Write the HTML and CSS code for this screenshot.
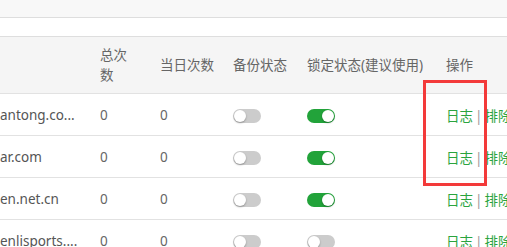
FILE: index.html
```html
<!DOCTYPE html>
<html lang="en">
<head>
    <meta charset="UTF-8">
    <title>域名列表</title>
    <link rel="stylesheet" href="styles.css">
</head>
<body>
    <div class="topbar"></div>
    <div class="toolbar"></div>

    <div class="table-wrap">
        <table class="list">
            <thead>
                <tr>
                    <th class="col-name"></th>
                    <th class="col-total"><span class="narrow">总次数</span></th>
                    <th class="col-today">当日次数</th>
                    <th class="col-backup">备份状态</th>
                    <th class="col-lock">锁定状态(建议使用)</th>
                    <th class="col-ops">操作</th>
                </tr>
            </thead>
            <tbody>
                <tr>
                    <td class="col-name">antong.co...</td>
                    <td>0</td>
                    <td>0</td>
                    <td><span class="switch"></span></td>
                    <td><span class="switch on"></span></td>
                    <td class="ops"><a>日志</a><span class="sep">|</span><a>排除</a></td>
                </tr>
                <tr>
                    <td class="col-name">ar.com</td>
                    <td>0</td>
                    <td>0</td>
                    <td><span class="switch"></span></td>
                    <td><span class="switch on"></span></td>
                    <td class="ops"><a>日志</a><span class="sep">|</span><a>排除</a></td>
                </tr>
                <tr>
                    <td class="col-name">en.net.cn</td>
                    <td>0</td>
                    <td>0</td>
                    <td><span class="switch"></span></td>
                    <td><span class="switch on"></span></td>
                    <td class="ops"><a>日志</a><span class="sep">|</span><a>排除</a></td>
                </tr>
                <tr>
                    <td class="col-name">enlisports....</td>
                    <td>0</td>
                    <td>0</td>
                    <td><span class="switch"></span></td>
                    <td><span class="switch"></span></td>
                    <td class="ops"><a>日志</a><span class="sep">|</span><a>排除</a></td>
                </tr>
            </tbody>
        </table>
        <div class="highlight"></div>
    </div>
</body>
</html>
```

FILE: styles.css
```css
body {
    margin: 0;
    font-family: "Noto Sans", "Noto Sans CJK SC", sans-serif;
    font-size: 13.5px;
    color: #666;
    background-color: #ffffff;
    overflow: hidden;
}

.topbar {
    height: 17px;
    background-color: #f8f8f8;
    border-bottom: 1px solid #dedede;
}

.toolbar {
    height: 18px;
    background-color: #ffffff;
    border-bottom: 1px solid #dedede;
}

.table-wrap {
    position: relative;
    width: 600px;
}

.list {
    border-collapse: collapse;
    table-layout: fixed;
    width: 600px;
}

.list th {
    height: 56px;
    padding: 0;
    background-color: #f5f5f5;
    font-weight: normal;
    text-align: left;
    line-height: 20px;
    color: #666;
    border-bottom: 1px solid #e2e2e2;
}

.list td {
    height: 41px;
    padding: 0;
    border-bottom: 1px solid #e2e2e2;
    color: #666;
}

.col-name { width: 100px; }
.col-total { width: 60px; }
.col-today { width: 73px; }
.col-backup { width: 74px; }
.col-lock { width: 139px; }

.narrow {
    display: block;
    width: 30px;
}

.list td.col-name {
    color: #555;
    white-space: nowrap;
    overflow: hidden;
}

.switch {
    display: inline-block;
    position: relative;
    width: 28px;
    height: 14px;
    border-radius: 7px;
    background-color: #cccccc;
    vertical-align: middle;
}

.switch::after {
    content: "";
    position: absolute;
    left: 1px;
    top: 1px;
    width: 12px;
    height: 12px;
    border-radius: 50%;
    background-color: #ffffff;
    box-shadow: 0 1px 2px rgba(0, 0, 0, .3);
}

.switch.on {
    background-color: #22a33a;
}

.switch.on::after {
    left: 15px;
}

.ops {
    white-space: nowrap;
}

.ops a {
    color: #2aa43e;
}

.sep {
    color: #999;
    margin: 0 2px;
}

.highlight {
    position: absolute;
    left: 423px;
    top: 43px;
    width: 58px;
    height: 100px;
    border: 3px solid #f33a3a;
}
```
